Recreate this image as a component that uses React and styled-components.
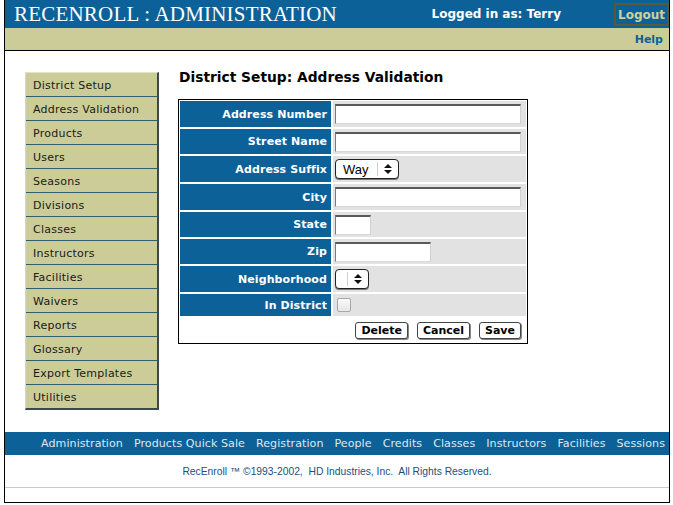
import styled, { createGlobalStyle } from "styled-components";

const GlobalStyle = createGlobalStyle`
  html, body {
    margin: 0;
    padding: 0;
    background: #fff;
  }
  body {
    font-family: "DejaVu Sans", Verdana, sans-serif;
  }
`;

const sideLinks = [
  "District Setup",
  "Address Validation",
  "Products",
  "Users",
  "Seasons",
  "Divisions",
  "Classes",
  "Instructors",
  "Facilities",
  "Waivers",
  "Reports",
  "Glossary",
  "Export Templates",
  "Utilities",
];

const navLinks = [
  "Administration",
  "Products Quick Sale",
  "Registration",
  "People",
  "Credits",
  "Classes",
  "Instructors",
  "Facilities",
  "Sessions",
];

const UpDown = () => (
  <svg width="8" height="10" viewBox="0 0 8 10">
    <path d="M4 0 L8 4 H0 Z" fill="#111" />
    <path d="M4 10 L8 6 H0 Z" fill="#111" />
  </svg>
);

const App = () => {
  return (
    <>
      <GlobalStyle />
      <Frame>
        <Header>
          <SiteTitle>RECENROLL : ADMINISTRATION</SiteTitle>
          <LoggedIn>Logged in as: Terry</LoggedIn>
          <LogoutButton>Logout</LogoutButton>
        </Header>
        <SubBar>
          <HelpLink>Help</HelpLink>
        </SubBar>

        <Content>
          <SideMenu>
            {sideLinks.map((s) => (
              <SideItem key={s}>{s}</SideItem>
            ))}
          </SideMenu>

          <Main>
            <PageTitle>District Setup: Address Validation</PageTitle>
            <FormTable>
              <Label h={26}>Address Number</Label>
              <Value>
                <TextInput w={186} />
              </Value>

              <Label h={25}>Street Name</Label>
              <Value>
                <TextInput w={186} />
              </Value>

              <Label h={26}>Address Suffix</Label>
              <Value>
                <SelectBox w={64}>
                  <SelectText>Way</SelectText>
                  <SelectArrow>
                    <UpDown />
                  </SelectArrow>
                </SelectBox>
              </Value>

              <Label h={26}>City</Label>
              <Value>
                <TextInput w={186} />
              </Value>

              <Label h={25}>State</Label>
              <Value>
                <TextInput w={36} />
              </Value>

              <Label h={25}>Zip</Label>
              <Value>
                <TextInput w={96} />
              </Value>

              <Label h={26}>Neighborhood</Label>
              <Value>
                <SelectBox w={34}>
                  <SelectText />
                  <SelectArrow>
                    <UpDown />
                  </SelectArrow>
                </SelectBox>
              </Value>

              <Label h={22}>In District</Label>
              <Value>
                <CheckBox />
              </Value>

              <ButtonRow>
                <FormButton>Delete</FormButton>
                <FormButton>Cancel</FormButton>
                <FormButton>Save</FormButton>
              </ButtonRow>
            </FormTable>
          </Main>
        </Content>

        <NavBar>
          {navLinks.map((n) => (
            <NavLink key={n}>{n}</NavLink>
          ))}
        </NavBar>
        <Copyright>
          RecEnroll ™ ©1993-2002,&nbsp; HD Industries, Inc.&nbsp; All Rights Reserved.
        </Copyright>
        <BottomRule />
      </Frame>
    </>
  );
};

export default App;

const Frame = styled.div`
  margin: 0 3px 0 4px;
  height: 503px;
  box-sizing: border-box;
  border: 1px solid #000;
  border-top: none;
  display: flex;
  flex-direction: column;
`;

const Header = styled.div`
  display: flex;
  align-items: center;
  height: 28px;
  background: #0d6199;
  padding-left: 9px;
`;

const SiteTitle = styled.div`
  flex: 1;
  font-family: "Liberation Serif", "Times New Roman", serif;
  font-size: 21px;
  color: #fff;
  letter-spacing: 0.2px;
`;

const LoggedIn = styled.div`
  font-family: "DejaVu Sans", Verdana, sans-serif;
  font-weight: 700;
  font-size: 12px;
  color: #fff;
  margin-right: 53px;
`;

const LogoutButton = styled.div`
  display: flex;
  align-items: center;
  height: 23px;
  box-sizing: border-box;
  padding: 0 2px;
  border: 2px solid #5b5836;
  margin-top: 1px;
  font-weight: 700;
  font-size: 12px;
  color: #d2cf9e;
`;

const SubBar = styled.div`
  height: 22px;
  background: #cccc99;
  border-bottom: 1px solid #000;
  display: flex;
  align-items: center;
  justify-content: flex-end;
  padding-right: 6px;
`;

const HelpLink = styled.div`
  font-weight: 700;
  font-size: 11px;
  color: #0d6199;
`;

const Content = styled.div`
  flex: 1;
  display: flex;
  align-items: flex-start;
  padding: 21px 0 0 20px;
`;

const SideMenu = styled.div`
  width: 131px;
  border-style: solid;
  border-width: 1px 2px 2px 1px;
  border-color: #e4e4c4 #3e4a4a #3e4a4a #d8d8c8;
  background: #cccc99;
`;

const SideItem = styled.div`
  height: 20px;
  padding-top: 3px;
  line-height: 20px;
  padding-left: 7px;
  font-size: 11px;
  letter-spacing: 0.25px;
  color: #1a1a1a;
  border-bottom: 1px solid #2f6070;
  &:last-child {
    border-bottom: none;
  }
`;

const Main = styled.div`
  margin-left: 20px;
  display: flex;
  flex-direction: column;
`;

const PageTitle = styled.div`
  margin-top: -3px;
  height: 16px;
  line-height: 16px;
  margin-bottom: 14px;
  font-weight: 700;
  font-size: 13.8px;
  color: #000;
`;

const FormTable = styled.div`
  display: grid;
  grid-template-columns: 151px 193px;
  gap: 2px;
  padding: 1px;
  margin-left: -1px;
  border: 1px solid #000;
  background: #fff;
`;

const Label = styled.div`
  height: ${(p) => p.h}px;
  background: #0d6199;
  color: #fff;
  font-weight: 700;
  font-size: 11px;
  letter-spacing: 0.1px;
  display: flex;
  align-items: center;
  justify-content: flex-end;
  padding-right: 4px;
`;

const Value = styled.div`
  background: #e2e2e2;
  display: flex;
  align-items: center;
  padding-left: 2px;
`;

const TextInput = styled.input`
  width: ${(p) => p.w}px;
  height: 20px;
  box-sizing: border-box;
  margin: 0;
  padding: 0 2px;
  background: #fff;
  border-style: solid;
  border-width: 2px 1px 1px 1px;
  border-color: #5a5a5a #d0d0d0 #d8d8d8 #7a7a7a;
  outline: none;
`;

const SelectBox = styled.div`
  width: ${(p) => p.w}px;
  height: 20px;
  box-sizing: border-box;
  display: flex;
  align-items: stretch;
  background: #fff;
  border: 1px solid #222;
  border-radius: 4px;
  box-shadow: 0 1px 0 #777;
`;

const SelectText = styled.div`
  flex: 1;
  display: flex;
  align-items: center;
  padding-left: 7px;
  font-family: "Liberation Sans", Arial, sans-serif;
  font-size: 13px;
  color: #000;
`;

const SelectArrow = styled.div`
  width: 20px;
  display: flex;
  align-items: center;
  justify-content: center;
  border-left: 1px solid #cfcfcf;
  margin: 2px 0;
`;

const CheckBox = styled.span`
  display: block;
  width: 12px;
  height: 12px;
  margin-left: 2px;
  border: 1px solid #a8a8a8;
  border-radius: 2px;
  background: linear-gradient(#fafafa, #e6e6e6);
`;

const ButtonRow = styled.div`
  grid-column: 1 / 3;
  height: 24px;
  display: flex;
  align-items: center;
  justify-content: flex-end;
  gap: 9px;
  padding-right: 5px;
`;

const FormButton = styled.button`
  height: 17px;
  padding: 0 5px;
  margin: 0;
  font-family: "DejaVu Sans", Verdana, sans-serif;
  font-weight: 700;
  font-size: 11px;
  color: #000;
  background: #fff;
  border: 1px solid #444;
  border-radius: 3px;
  box-shadow: 1px 1px 0 #888;
  line-height: 15px;
`;

const NavBar = styled.div`
  height: 23px;
  background: #0d6199;
  display: flex;
  align-items: center;
  justify-content: flex-end;
  gap: 11px;
  padding-right: 4px;
`;

const NavLink = styled.div`
  font-size: 11.1px;
  letter-spacing: 0.05px;
  color: #dde8f0;
  white-space: nowrap;
`;

const Copyright = styled.div`
  height: 32px;
  display: flex;
  align-items: center;
  justify-content: center;
  font-family: "Liberation Sans", Tahoma, sans-serif;
  font-size: 10.3px;
  color: #1a4f86;
`;

const BottomRule = styled.div`
  border-top: 1px solid #cccccc;
  height: 14px;
`;
